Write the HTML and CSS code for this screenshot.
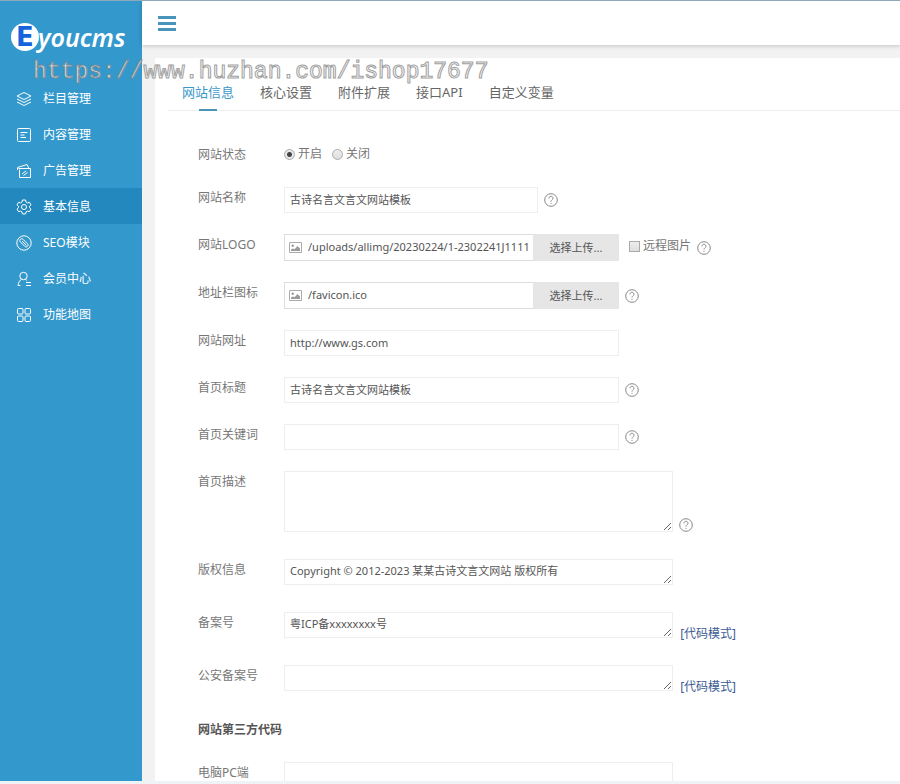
FILE: index.html
```html
<!DOCTYPE html>
<html lang="zh-CN">
<head>
  <meta charset="UTF-8">
  <meta name="viewport" content="width=device-width,initial-scale=1">
  <title>基本信息 - Eyoucms</title>
  <link rel="stylesheet" href="styles.css">
</head>
<body>
  <!-- shared icons -->
  <svg class="defs" width="0" height="0">
    <symbol id="help" viewBox="0 0 14 14">
      <circle cx="7" cy="7" r="6.3"/>
      <path d="M5 5.4C5 4 5.9 3.3 7 3.3s2 .8 2 1.9C9 6.700 7 6.800 7 8.600M7 9.900v1"/>
    </symbol>
    <symbol id="picture" viewBox="0 0 13 11">
      <path d="M.5.5h12v10H.5z" fill="#fff" stroke="#aaa"/>
      <circle cx="3.700" cy="3.700" r="1.200" fill="#999"/>
      <path d="M2 9V7.500l2-1 1.500.8L8.500 4 11 6.500V9z" fill="#999"/>
    </symbol>
  </svg>

  <div class="watermark">https://www.huzhan.com/ishop17677</div>

  <div class="layout">
    <aside class="sidebar">
      <a class="logo" href="#"><span class="logo-e">E</span><span class="logo-text">youcms</span></a>
      <nav class="menu">
        <a href="#">
          <svg viewBox="0 0 16 16"><path d="M8 1.500 15 5 8 8.500 1 5zM1 8l7 3.500L15 8M1 11l7 3.500 7-3.500"/></svg>
          栏目管理
        </a>
        <a href="#">
          <svg viewBox="0 0 16 16"><rect x="1.500" y="1.500" width="13" height="13" rx="1"/><path d="M4.500 5.500h7M4.500 8h4M4.500 10.500h5.500"/></svg>
          内容管理
        </a>
        <a href="#">
          <svg viewBox="0 0 16 16"><path d="M2.500 5.500h12v9h-11v-8M1.500 7V4.500L11 1.500l2 4M6 11l4-3M7.500 12.500l4-3"/></svg>
          广告管理
        </a>
        <a class="active" href="#">
          <svg viewBox="0 0 16 16"><circle cx="8" cy="8" r="2.500"/><path d="M6.500 1h3l.5 2 1.500.9 2-.6 1.500 2.600L13.500 7.300v1.400L15 10.100l-1.500 2.600-2-.6L10 13l-.5 2h-3L6 13l-1.500-.9-2 .6L1 10.100l1.500-1.400V7.300L1 5.900l1.500-2.600 2 .6L6 3z"/></svg>
          基本信息
        </a>
        <a href="#">
          <svg viewBox="0 0 16 16"><circle cx="8" cy="8" r="7.200"/><path d="M4.300 4.300c1-1 2-.7 2.700 0l4.500 4.500c1.700 1.700-.9 4.300-2.600 2.600L4.400 6.900c-.7-.7-1-1.700-.1-2.600zM6 6l4.500 4.500"/></svg>
          SEO模块
        </a>
        <a href="#">
          <svg viewBox="0 0 16 16"><circle cx="7.500" cy="5" r="3.700"/><path d="M5.500 8.200C3.500 9.500 2.500 11.500 2 14.500h2.500M9.500 8.200l1.500 1.300M10 11.500h5M10 14.500h5"/></svg>
          会员中心
        </a>
        <a href="#">
          <svg viewBox="0 0 16 16"><rect x="1.500" y="1.500" width="5.500" height="5.500" rx="1"/><rect x="9" y="1.500" width="5.500" height="5.500" rx="1"/><rect x="1.500" y="9" width="5.500" height="5.500" rx="1"/><rect x="9" y="9" width="5.500" height="5.500" rx="1"/></svg>
          功能地图
        </a>
      </nav>
    </aside>

    <div class="main">
      <header class="topbar">
        <button class="toggle" type="button" aria-label="菜单"><i></i><i></i><i></i></button>
      </header>

      <section class="panel">
        <nav class="tabs">
          <a class="current" href="#">网站信息</a>
          <a href="#">核心设置</a>
          <a href="#">附件扩展</a>
          <a href="#">接口API</a>
          <a href="#">自定义变量</a>
        </nav>

        <form class="form">
          <div class="row status">
            <span class="name">网站状态</span>
            <div class="field">
              <label class="choice"><input type="radio" name="status" checked>开启</label>
              <label class="choice"><input type="radio" name="status">关闭</label>
            </div>
          </div>
          <div class="row">
            <label class="name" for="webName">网站名称</label>
            <div class="field">
              <input class="text short" id="webName" type="text" value="古诗名言文言文网站模板">
              <svg class="help"><use href="#help"/></svg>
            </div>
          </div>
          <div class="row">
            <label class="name" for="webLogo">网站LOGO</label>
            <div class="field">
              <div class="upload">
                <svg class="pic"><use href="#picture"/></svg>
                <input id="webLogo" type="text" value="/uploads/allimg/20230224/1-2302241J1111Z.png">
                <button type="button">选择上传...</button>
              </div>
              <label class="choice remote"><input type="checkbox">远程图片</label>
              <svg class="help"><use href="#help"/></svg>
            </div>
          </div>
          <div class="row">
            <label class="name" for="webIco">地址栏图标</label>
            <div class="field">
              <div class="upload">
                <svg class="pic"><use href="#picture"/></svg>
                <input id="webIco" type="text" value="/favicon.ico">
                <button type="button">选择上传...</button>
              </div>
              <svg class="help"><use href="#help"/></svg>
            </div>
          </div>
          <div class="row">
            <label class="name" for="webUrl">网站网址</label>
            <div class="field">
              <input class="text" id="webUrl" type="text" value="http://www.gs.com">
            </div>
          </div>
          <div class="row">
            <label class="name" for="webTitle">首页标题</label>
            <div class="field">
              <input class="text" id="webTitle" type="text" value="古诗名言文言文网站模板">
              <svg class="help"><use href="#help"/></svg>
            </div>
          </div>
          <div class="row">
            <label class="name" for="webKeywords">首页关键词</label>
            <div class="field">
              <input class="text" id="webKeywords" type="text">
              <svg class="help"><use href="#help"/></svg>
            </div>
          </div>
          <div class="row">
            <label class="name" for="webDesc">首页描述</label>
            <div class="memo">
              <textarea class="tall" id="webDesc"></textarea>
              <svg class="help"><use href="#help"/></svg>
            </div>
          </div>
          <div class="row">
            <label class="name" for="copyright">版权信息</label>
            <div class="memo">
              <textarea id="copyright">Copyright © 2012-2023 某某古诗文言文网站 版权所有</textarea>
            </div>
          </div>
          <div class="row">
            <label class="name" for="recordNum">备案号</label>
            <div class="memo">
              <textarea id="recordNum">粤ICP备xxxxxxxx号</textarea>
              <a href="#">[代码模式]</a>
            </div>
          </div>
          <div class="row">
            <label class="name" for="policeNum">公安备案号</label>
            <div class="memo">
              <textarea id="policeNum"></textarea>
              <a href="#">[代码模式]</a>
            </div>
          </div>
          <h3>网站第三方代码</h3>
          <div class="row">
            <label class="name" for="codePc">电脑PC端</label>
            <div class="memo">
              <textarea class="tall" id="codePc"></textarea>
            </div>
          </div>
        </form>
      </section>
    </div>
  </div>
</body>
</html>
```

FILE: styles.css
```css
* { box-sizing:border-box; }
body { margin:0; height:100vh; display:flex; flex-direction:column; overflow:hidden; background:#f0f3f6; border-top:1px solid #8fa9b8; border-bottom:3px solid #eef3f6; font:12px/20px "Noto Sans", "Noto Sans CJK SC", sans-serif; color:#777; }
a { color:inherit; text-decoration:none; }
input, textarea, button { font:inherit; font-size:11px; color:#555; margin:0; }
.defs { position:absolute; }
.layout { flex:1; min-height:0; display:flex; }

.watermark { position:absolute; left:33px; top:58px; z-index:10; pointer-events:none; opacity:.8; font:23px/28px "Liberation Mono", monospace; color:#fff; -webkit-text-stroke:1px #888; white-space:nowrap; }

/* sidebar */
.sidebar { flex:0 0 142px; background:#3398cc; color:#fff; }
.logo { display:flex; align-items:center; height:79px; padding:0 0 8px 11px; }
.logo-e { flex:none; width:28px; height:28px; border-radius:50%; background:#fff; color:#1763dc; font:bold 26px/28px "DejaVu Sans", sans-serif; text-align:center; }
.logo-text { margin-left:-1px; font:italic 600 25px/30px "Noto Sans", sans-serif; }
.menu a { display:flex; align-items:center; gap:11px; height:36px; padding:1px 0 0 16px; }
.menu a.active { background:#2388bd; }
.menu svg { width:16px; height:16px; fill:none; stroke:#fff; stroke-width:1; stroke-linejoin:round; }

/* top bar */
.main { flex:1; min-width:0; display:flex; flex-direction:column; background:#f2f2f2; }
.topbar { flex:0 0 44px; display:flex; align-items:center; padding-left:16px; background:#fff; box-shadow:0 1px 4px rgba(0,0,0,.2); }
.toggle { display:flex; flex-direction:column; gap:3px; padding:0; border:0; background:none; }
.toggle i { width:18px; height:3px; background:#4a94bb; }

/* content */
.panel { flex:1; min-height:0; margin:13px 0 0 13px; padding:14px 0 0 13px; background:#fff; overflow:hidden; }
.tabs { display:flex; gap:26px; height:39px; padding-left:14px; border-bottom:1px solid #eee; font-size:13px; line-height:40px; color:#666; }
.tabs a { display:flex; flex-direction:column; align-items:center; height:39px; }
.tabs .current { color:#3b97c8; }
.tabs .current::after { content:""; flex:none; width:18px; height:2px; margin-top:-3px; background:#4a94bb; }

.form { padding:33px 0 0 30px; }
.row { display:flex; align-items:flex-start; margin-bottom:21px; }
.name { flex:0 0 86px; padding-top:1px; }
.field { display:flex; align-items:center; gap:6px; }
.status { min-height:22px; }
.status .field { gap:10px; }
.choice { display:flex; align-items:center; gap:3px; }
.choice input { appearance:none; width:11px; height:11px; border:1px solid #aaa; background:linear-gradient(#eee, #ddd); }
.choice input[type=radio] { border-radius:50%; }
.choice input[type=radio]:checked { background:radial-gradient(circle, #444 0 2px, #e8e8e8 3px); }
.remote { margin-left:4px; align-self:flex-start; line-height:24px; }

.text { width:335px; height:26px; padding:0 5px 2px; border:1px solid #eee; }
.text.short { width:254px; }
.upload { display:flex; align-items:center; width:335px; height:27px; padding-left:4px; border:1px solid #ddd; }
.upload .pic { flex:none; width:13px; height:11px; }
.upload input { flex:1; min-width:0; height:25px; padding:0 0 2px 6px; border:0; border-right:4px solid transparent; background:none; }
.upload button { flex:0 0 86px; height:27px; margin-right:-1px; padding:0; border:0; background:#e6e6e6; }
.help { width:14px; height:14px; flex:none; fill:none; stroke:#888; stroke-width:1; }

.memo textarea { width:389px; height:26px; padding:1px 5px; border:1px solid #eee; line-height:20px; overflow:hidden; vertical-align:baseline; }
.memo textarea.tall { height:61px; }
.memo .help { margin-left:3px; vertical-align:baseline; }
.memo a { margin-left:4px; color:#3b5a93; }
h3 { margin:0 0 20px; font-size:12px; line-height:24px; color:#555; }
```
